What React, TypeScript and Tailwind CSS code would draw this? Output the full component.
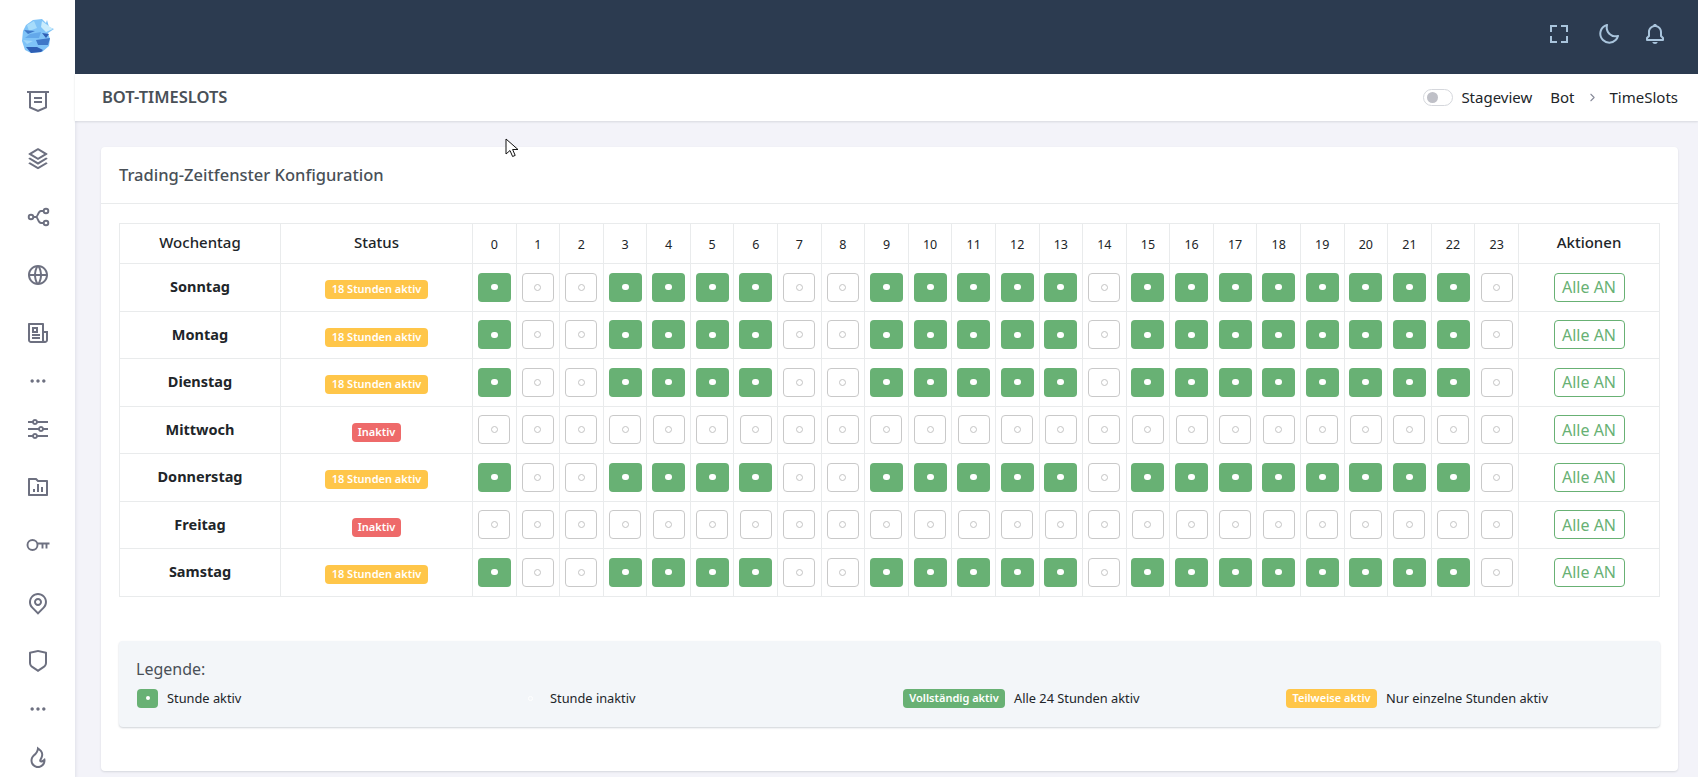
import { BiBell, BiFullscreen, BiMoon } from "react-icons/bi";
import {
  RiEqualizerLine,
  RiFireLine,
  RiFolderChartLine,
  RiGlobalLine,
  RiHonourLine,
  RiMapPinLine,
  RiMoreFill,
  RiNewspaperLine,
  RiShieldLine,
  RiStackLine,
} from "react-icons/ri";
import { LuChevronRight } from "react-icons/lu";

const hours = Array.from({ length: 24 }, (_, i) => i);
const activeHours = [0, 3, 4, 5, 6, 9, 10, 11, 12, 13, 15, 16, 17, 18, 19, 20, 21, 22];

const days = [
  { name: "Sonntag", active: true },
  { name: "Montag", active: true },
  { name: "Dienstag", active: true },
  { name: "Mittwoch", active: false },
  { name: "Donnerstag", active: true },
  { name: "Freitag", active: false },
  { name: "Samstag", active: true },
];

const iconClass = "text-[24px]";

function Logo() {
  return (
    <svg width="32" height="34" viewBox="0 0 32 34" aria-hidden>
      <polygon points="4,6 11,1 20,0 24,4 25,1 27,8 32,10 26,14 28,20 27,27 20,33 9,34 3,31 0,22 1,12" fill="#7fc3f7" />
      <polygon points="5,6 12,2 15,9 7,12" fill="#a6dcfb" />
      <polygon points="20,2 24,5 31,10 24,13 19,8" fill="#c9ecfd" />
      <polygon points="2,11 13,12 6,15" fill="#3f78c8" />
      <polygon points="8,15 19,13 17,19 3,19" fill="#63a8ea" />
      <polygon points="1,21 11,22 5,25" fill="#a2d8fa" />
      <polygon points="14,21 28,19 26,26 16,26" fill="#3f78c8" />
      <polygon points="4,28 15,28 21,31 19,33 9,34" fill="#2f5fb4" />
      <polygon points="20,14 27,15 24,19" fill="#2f5fb4" />
    </svg>
  );
}

function ShareIcon() {
  return (
    <svg
      width="24"
      height="24"
      viewBox="0 0 24 24"
      fill="none"
      stroke="currentColor"
      strokeWidth="1.9"
      aria-hidden
    >
      <circle cx="5" cy="12" r="2.3" />
      <circle cx="20" cy="6" r="2.3" />
      <circle cx="20" cy="18" r="2.3" />
      <path d="M7.3 12H10c2 0 2-6 5-6h2.7M10 12c2 0 2 6 5 6h2.7" />
    </svg>
  );
}

function KeyIcon() {
  return (
    <svg
      width="24"
      height="24"
      viewBox="0 0 24 24"
      fill="none"
      stroke="currentColor"
      strokeWidth="1.9"
      aria-hidden
    >
      <circle cx="6.5" cy="12" r="5" />
      <path d="M11.5 10.5H23.5M16.5 10.5v5M20.5 10.5v5" />
    </svg>
  );
}

function Sidebar() {
  const items = [
    <RiHonourLine className={iconClass} />,
    <RiStackLine className={iconClass} />,
    <ShareIcon />,
    <RiGlobalLine className={iconClass} />,
    <RiNewspaperLine className={iconClass} />,
    null,
    <RiEqualizerLine className={iconClass} />,
    <RiFolderChartLine className={iconClass} />,
    <KeyIcon />,
    <RiMapPinLine className={iconClass} />,
    <RiShieldLine className={iconClass} />,
    null,
    <RiFireLine className={iconClass} />,
  ];

  return (
    <aside className="flex h-full w-[75px] shrink-0 flex-col items-center bg-white text-[#6d7080] shadow-[0_2px_4px_rgba(15,34,58,0.12)]">
      <div className="flex h-[72px] shrink-0 items-center justify-center">
        <Logo />
      </div>
      {items.map((icon, i) =>
        icon ? (
          <div key={i} className="flex h-[58px] shrink-0 items-center justify-center">
            {icon}
          </div>
        ) : (
          <div key={i} className="flex h-[38px] shrink-0 items-center justify-center">
            <RiMoreFill className="text-[20px]" />
          </div>
        ),
      )}
    </aside>
  );
}

function HourButton({ on }: { on: boolean }) {
  return on ? (
    <button
      type="button"
      className="mx-auto flex h-[29px] w-[33px] items-center justify-center rounded-[4px] bg-[#68b174] text-white"
    >
      <span className="h-[6px] w-[7px] rounded-full bg-white" />
    </button>
  ) : (
    <button
      type="button"
      className="mx-auto flex h-[29px] w-[32px] items-center justify-center rounded-[4px] border border-[#c9c9c9] bg-white"
    >
      <span className="h-[7px] w-[7px] rounded-full border border-[#c4c4c4]" />
    </button>
  );
}

function Schedule() {
  const cell = "border border-[#e9ebec] p-0 text-center align-middle";
  return (
    <table className="w-full table-fixed border-collapse text-[#212529]">
      <colgroup>
        <col className="w-[161px]" />
        <col className="w-[192px]" />
        {hours.map((h) => (
          <col key={h} />
        ))}
        <col className="w-[141px]" />
      </colgroup>
      <thead>
        <tr className="h-[40px]">
          <th className={`${cell} pb-[3px] text-[15px] font-medium`}>Wochentag</th>
          <th className={`${cell} pb-[3px] text-[15px] font-medium`}>Status</th>
          {hours.map((h) => (
            <th key={h} className={`${cell} pt-1 text-[12.5px] font-normal`}>
              {h}
            </th>
          ))}
          <th className={`${cell} pb-[3px] text-[15px] font-medium`}>Aktionen</th>
        </tr>
      </thead>
      <tbody>
        {days.map((day) => (
          <tr key={day.name} className="h-[47.5px]">
            <td className={`${cell} text-[14.5px] font-bold`}>{day.name}</td>
            <td className={cell}>
              {day.active ? (
                <span className="inline-flex h-[19px] w-[103px] items-center justify-center rounded-[4px] bg-[#ffc649] text-[11px] font-semibold text-white">
                  18 Stunden aktiv
                </span>
              ) : (
                <span className="inline-flex h-[19px] w-[49px] items-center justify-center rounded-[4px] bg-[#ee6a6a] text-[11px] font-semibold text-white">
                  Inaktiv
                </span>
              )}
            </td>
            {hours.map((h) => (
              <td key={h} className={cell}>
                <HourButton on={day.active && activeHours.includes(h)} />
              </td>
            ))}
            <td className={cell}>
              <button
                type="button"
                className="h-[29px] w-[71px] rounded-[4px] border border-[#68b174] bg-white text-[16px] text-[#68b174]"
              >
                Alle AN
              </button>
            </td>
          </tr>
        ))}
      </tbody>
    </table>
  );
}

function Legend() {
  return (
    <div className="mt-[44px] h-[86px] overflow-hidden rounded-[4px] bg-[#f3f6f9] pl-[17px] pt-[17px] shadow-[0_1px_2px_rgba(15,34,58,0.2)]">
      <h5 className="text-[16px] leading-[22px] text-[#495057]">Legende:</h5>
      <div className="ml-px mt-[9px] grid grid-cols-[repeat(4,383px)] text-[12.8px] text-[#212529]">
        <div className="flex items-center gap-[9px]">
          <span className="flex h-[19px] w-[21px] items-center justify-center rounded-[4px] bg-[#68b174]">
            <span className="h-[4px] w-[4px] rounded-full bg-white" />
          </span>
          <span>Stunde aktiv</span>
        </div>
        <div className="flex items-center gap-[9px]">
          <span className="flex h-[19px] w-[21px] items-center justify-center">
            <span className="h-[5px] w-[5px] rounded-full border border-white" />
          </span>
          <span>Stunde inaktiv</span>
        </div>
        <div className="flex items-center gap-[9px]">
          <span className="flex h-[19px] w-[102px] items-center justify-center rounded-[4px] bg-[#68b174] text-[11px] font-semibold text-white">
            Vollständig aktiv
          </span>
          <span>Alle 24 Stunden aktiv</span>
        </div>
        <div className="flex items-center gap-[9px]">
          <span className="flex h-[19px] w-[91px] items-center justify-center rounded-[4px] bg-[#ffc649] text-[11px] font-semibold text-white">
            Teilweise aktiv
          </span>
          <span>Nur einzelne Stunden aktiv</span>
        </div>
      </div>
    </div>
  );
}

export default function App() {
  return (
    <div className="relative flex h-screen overflow-hidden bg-[#f3f3f9] font-['Noto_Sans',sans-serif]">
      <Sidebar />
      <div className="flex min-w-0 flex-1 flex-col">
        <header className="flex h-[74px] shrink-0 items-center justify-end bg-[#2c3b50] pb-[6px] pr-[31px] text-[#a9c4dc]">
          <BiFullscreen className="mr-[26px] text-[24px]" />
          <BiMoon className="mr-[22px] text-[24px]" />
          <BiBell className="text-[24px]" />
        </header>
        <div className="flex h-[47px] shrink-0 items-center justify-between bg-white pl-[27px] pr-[20px] shadow-[0_1px_2px_rgba(56,65,74,0.15)]">
          <h4 className="text-[16.5px] font-semibold text-[#495057]">BOT-TIMESLOTS</h4>
          <div className="flex items-center text-[15px] text-[#212529]">
            <span className="mr-[8px] flex h-[17px] w-[30px] items-center rounded-full border border-[#d5d7dc] bg-white pl-[3px]">
              <span className="h-[11px] w-[11px] rounded-full bg-[#bfc0c7]" />
            </span>
            <span className="mr-[18px]">Stageview</span>
            <span>Bot</span>
            <LuChevronRight className="mx-[11px] text-[13px] text-[#878a99]" />
            <span>TimeSlots</span>
          </div>
        </div>
        <main className="flex-1 pl-[26px] pr-[20px] pt-[26px]">
          <section className="h-[624px] rounded-[4px] bg-white shadow-[0_1px_2px_rgba(56,65,74,0.15)]">
            <div className="flex h-[57px] items-center border-b border-[#e9ebec] px-[18px]">
              <h5 className="text-[16.5px] font-medium text-[#495057]">Trading-Zeitfenster Konfiguration</h5>
            </div>
            <div className="px-[18px] pt-[19px]">
              <Schedule />
              <Legend />
            </div>
          </section>
        </main>
      </div>
      <svg
        className="absolute left-[505px] top-[138px]"
        width="14"
        height="20"
        viewBox="0 0 14 20"
        aria-hidden
      >
        <path d="M1 1v15l4-3.5 2.6 6 2.6-1.1-2.6-5.9h5.4z" fill="#fff" stroke="#111" strokeWidth="1" />
      </svg>
    </div>
  );
}
